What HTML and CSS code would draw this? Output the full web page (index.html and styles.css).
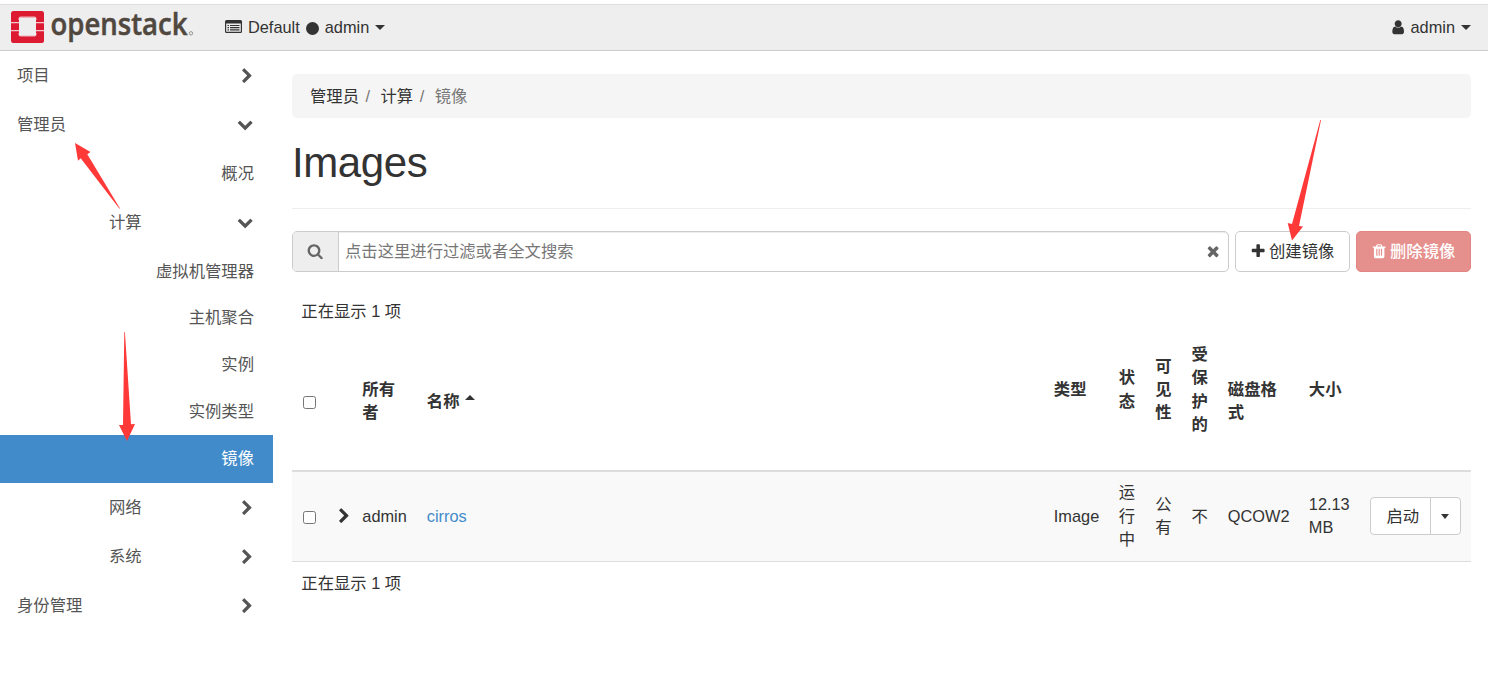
FILE: index.html
```html
<!DOCTYPE html>
<html lang="zh-CN">
<head>
	<meta charset="UTF-8">
	<meta name="viewport" content="width=device-width, initial-scale=1.0">
	<title>Images - OpenStack Dashboard</title>
	<link rel="stylesheet" href="styles.css">
</head>
<body>

<!-- shared icons -->
<svg class="sprite" width="0" height="0">
	<symbol id="chevron-right" viewBox="0 0 1792 1792"><path d="M1363 877l-742 742q-19 19-45 19t-45-19l-166-166q-19-19-19-45t19-45l531-531-531-531q-19-19-19-45t19-45l166-166q19-19 45-19t45 19l742 742q19 19 19 45t-19 45z"/></symbol>
	<symbol id="chevron-down" viewBox="0 0 1792 1792"><path d="M1683 808l-742 741q-19 19-45 19t-45-19l-742-741q-19-19-19-45.500t19-45.500l166-165q19-19 45-19t45 19l531 531 531-531q19-19 45-19t45 19l166 165q19 19 19 45.500t-19 45.500z"/></symbol>
	<symbol id="user" viewBox="0 0 1792 1792"><path d="M1536 1399q0 109-62.500 187t-150.500 78h-854q-88 0-150.500-78t-62.500-187q0-85 8.500-160.500t31.500-152 58.500-131 94-89 134.500-34.500q131 128 313 128t313-128q76 0 134.500 34.500t94 89 58.500 131 31.500 152 8.500 160.500zm-256-887q0 159-112.500 271.500t-271.500 112.500-271.500-112.500-112.500-271.500 112.500-271.500 271.500-112.500 271.500 112.500 112.500 271.500z"/></symbol>
	<symbol id="search" viewBox="0 0 1792 1792"><path d="M1216 832q0-185-131.500-316.500t-316.500-131.500-316.500 131.500-131.500 316.500 131.500 316.500 316.500 131.500 316.500-131.500 131.500-316.500zm512 832q0 52-38 90t-90 38q-54 0-90-38l-343-342q-179 124-399 124-143 0-273.500-55.500t-225-150-150-225-55.500-273.500 55.500-273.500 150-225 225-150 273.500-55.500 273.500 55.500 225 150 150 225 55.500 273.500q0 220-124 399l343 343q37 37 37 90z"/></symbol>
	<symbol id="plus" viewBox="0 0 1792 1792"><path d="M1600 736v192q0 40-28 68t-68 28h-416v416q0 40-28 68t-68 28h-192q-40 0-68-28t-28-68v-416h-416q-40 0-68-28t-28-68v-192q0-40 28-68t68-28h416v-416q0-40 28-68t68-28h192q40 0 68 28t28 68v416h416q40 0 68 28t28 68z"/></symbol>
	<symbol id="times" viewBox="0 0 1792 1792"><path d="M1490 1322q0 40-28 68l-136 136q-28 28-68 28t-68-28l-294-294-294 294q-28 28-68 28t-68-28l-136-136q-28-28-28-68t28-68l294-294-294-294q-28-28-28-68t28-68l136-136q28-28 68-28t68 28l294 294 294-294q28-28 68-28t68 28l136 136q28 28 28 68t-28 68l-294 294 294 294q28 28 28 68z"/></symbol>
	<symbol id="trash" viewBox="0 0 1792 1792"><path d="M704 1376v-704q0-14-9-23t-23-9h-64q-14 0-23 9t-9 23v704q0 14 9 23t23 9h64q14 0 23-9t9-23zm256 0v-704q0-14-9-23t-23-9h-64q-14 0-23 9t-9 23v704q0 14 9 23t23 9h64q14 0 23-9t9-23zm256 0v-704q0-14-9-23t-23-9h-64q-14 0-23 9t-9 23v704q0 14 9 23t23 9h64q14 0 23-9t9-23zm-544-992h448l-48-117q-7-9-17-11h-317q-10 2-17 11zm928 32v64q0 14-9 23t-23 9h-96v948q0 83-47 143.500t-113 60.500h-832q-66 0-113-58.500t-47-141.500v-952h-96q-14 0-23-9t-9-23v-64q0-14 9-23t23-9h309l70-167q15-37 54-63t79-26h320q40 0 79 26t54 63l70 167h309q14 0 23 9t9 23z"/></symbol>
</svg>

<header class="navbar">
	<a class="brand" href="#">
		<svg width="184" height="44" viewBox="0 0 184 44">
			<rect x="0" y="5" width="33" height="32" rx="2.500" fill="#dc1a32"/>
			<path d="M7.500 14v-1.500a2 2 0 0 1 2-2h14a2 2 0 0 1 2 2V14zM7.500 27v1.500a2 2 0 0 0 2 2h14a2 2 0 0 0 2-2V27z" fill="#f0b3bb"/>
			<rect x="8" y="12" width="17" height="17.500" rx="1" fill="#eee"/>
			<path d="M0 16.700h8M25 16.700h8M0 24.700h8M25 24.700h8" stroke="#f3c9ce" stroke-width="1.200"/>
			<text class="brand-name" x="39.500" y="29" textLength="137" lengthAdjust="spacingAndGlyphs">openstack</text>
			<circle cx="180" cy="27.300" r="1.700" fill="none" stroke="#8f8a84" stroke-width=".9"/>
		</svg>
	</a>
	<a class="context" href="#">
		<svg class="list-icon" width="17" height="14" viewBox="0 0 17 14">
			<path fill-rule="evenodd" d="M1.500 0h14A1.500 1.500 0 0 1 17 1.500v10a1.500 1.500 0 0 1-1.500 1.500h-14A1.500 1.500 0 0 1 0 11.500v-10A1.500 1.500 0 0 1 1.500 0zM1.200 3.500v8.300h14.600V3.500z"/>
			<path d="M2.500 5.500H4M5 5.500h9.500M2.500 7.700H4M5 7.700h9.500M2.500 9.900H4M5 9.900h9.500" stroke="#333" stroke-width="1.200"/>
		</svg>
		<span>Default</span>
		<i class="dot"></i>
		<span>admin</span>
		<b class="caret"></b>
	</a>
	<a class="user-menu" href="#">
		<svg class="icon"><use href="#user"/></svg>
		<span>admin</span>
		<b class="caret"></b>
	</a>
</header>

<div class="page">
	<nav class="sidebar">
		<a class="item">项目<svg class="icon right"><use href="#chevron-right"/></svg></a>
		<a class="item">管理员<svg class="icon"><use href="#chevron-down"/></svg></a>
		<a class="item leaf">概况</a>
		<a class="item group">计算<svg class="icon"><use href="#chevron-down"/></svg></a>
		<div class="panels">
			<a class="item leaf">虚拟机管理器</a>
			<a class="item leaf">主机聚合</a>
			<a class="item leaf">实例</a>
			<a class="item leaf">实例类型</a>
			<a class="item leaf active">镜像</a>
		</div>
		<a class="item group">网络<svg class="icon right"><use href="#chevron-right"/></svg></a>
		<a class="item group">系统<svg class="icon right"><use href="#chevron-right"/></svg></a>
		<a class="item">身份管理<svg class="icon right"><use href="#chevron-right"/></svg></a>
	</nav>

	<main class="content">
		<ol class="breadcrumb">
			<li>管理员</li>
			<li>计算</li>
			<li class="current">镜像</li>
		</ol>

		<h1>Images</h1>

		<div class="toolbar">
			<div class="search">
				<span class="addon"><svg class="icon"><use href="#search"/></svg></span>
				<input class="search-input" type="text" placeholder="点击这里进行过滤或者全文搜索">
				<svg class="icon clear"><use href="#times"/></svg>
			</div>
			<button class="btn"><svg class="icon"><use href="#plus"/></svg>创建镜像</button>
			<button class="btn danger"><svg class="icon"><use href="#trash"/></svg>删除镜像</button>
		</div>

		<table class="images">
			<colgroup>
				<col class="c-check"><col class="c-expand"><col class="c-owner"><col class="c-name">
				<col class="c-type"><col class="c-narrow"><col class="c-narrow"><col class="c-narrow">
				<col class="c-format"><col class="c-size"><col class="c-actions">
			</colgroup>
			<thead>
				<tr><td class="count" colspan="11">正在显示 1 项</td></tr>
				<tr class="heads">
					<th><input type="checkbox"></th>
					<th></th>
					<th>所有者</th>
					<th>名称 <b class="caret up"></b></th>
					<!-- the hidden sort caret wraps to a line of its own -->
					<th class="sortable">类型</th>
					<th class="sortable">状态</th>
					<th class="sortable">可见性</th>
					<th class="sortable">受保护的</th>
					<th>磁盘格式</th>
					<th class="sortable">大小</th>
					<th></th>
				</tr>
			</thead>
			<tbody>
				<tr>
					<td><input type="checkbox"></td>
					<td class="expand"><svg class="icon"><use href="#chevron-right"/></svg></td>
					<td>admin</td>
					<td><a href="#">cirros</a></td>
					<td>Image</td>
					<td>运行中</td>
					<td>公有</td>
					<td>不</td>
					<td>QCOW2</td>
					<td>12.13 MB</td>
					<td>
						<div class="btn-group">
							<button class="btn launch">启动</button>
							<button class="btn toggle"><b class="caret"></b></button>
						</div>
					</td>
				</tr>
			</tbody>
			<tfoot>
				<tr><td class="count" colspan="11">正在显示 1 项</td></tr>
			</tfoot>
		</table>
	</main>
</div>

<!-- pointers drawn over the page -->
<svg class="arrows" width="1488" height="689" viewBox="0 0 1488 689">
	<path d="M75 143L90.500 152L87.300 154.300L120 208.500L119.300 208.500L80.700 158.300L78 160.700z"/>
	<path d="M124.300 332H124.900L131 424.300L135 424L127 441L119 425L123 425z"/>
	<path d="M1320.300 120H1321L1299 226L1303 226.500L1292 240.500L1287.700 223L1292 224z"/>
</svg>

</body>
</html>
```
FILE: styles.css
```css
* {
	box-sizing: border-box;
}

body {
	margin: 0;
	padding-top: 4px;
	font-family: "Liberation Sans", "Noto Sans CJK SC", sans-serif;
	font-size: 16.33px;
	line-height: 23.33px;
	color: #333;
	background: white;
	overflow: hidden;
}

a {
	color: #428bca;
	text-decoration: none;
}

button, input {
	font: inherit;
	color: inherit;
}

.sprite {
	display: block;
}

.icon {
	width: 16.33px;
	height: 16.33px;
	fill: currentColor;
	flex: none;
}

.caret {
	display: inline-block;
	border-top: 5px solid;
	border-left: 5px solid transparent;
	border-right: 5px solid transparent;
}
.caret.up {
	margin-left: 1px;
	border-top: none;
	border-bottom: 5px solid;
	vertical-align: 7px;
}

/* top bar */
.navbar {
	display: flex;
	align-items: center;
	height: 47px;
	padding: 0 17px 0 11px;
	background: #eee;
	border-top: 1px solid #ddd;
	border-bottom: 1px solid #ccc;
}
.navbar a {
	display: flex;
	align-items: center;
	color: #333;
}
.brand svg {
	overflow: visible;
}
.brand-name {
	font-family: "Open Sans", sans-serif;
	font-size: 30px;
	font-weight: 600;
	line-height: 30px;
	fill: #50483f;
	stroke: #50483f;
	stroke-width: .5;
}
.context {
	margin-left: 30px;
}
.list-icon {
	fill: #333;
	margin-right: 6px;
}
.dot {
	width: 13px;
	height: 13px;
	margin: 3px 6px 0;
	border-radius: 50%;
	background: #333;
}
.navbar .caret {
	margin-left: 6px;
}
.user-menu {
	margin-left: auto;
}
.user-menu .icon {
	margin-right: 4px;
}

.page {
	display: flex;
}

/* left navigation */
.sidebar {
	width: 273px;
}
.item {
	display: flex;
	align-items: center;
	justify-content: space-between;
	height: 49px;
	padding: 0 19px 0 17px;
	color: #555;
}
.item .icon {
	margin-right: 1px;
}
.item .icon.right {
	margin: 2px -1px 0 0;
}
.item.group {
	padding-left: 109px;
}
.item.leaf {
	justify-content: flex-end;
}
.panels {
	padding-top: 1px;
}
.panels .item {
	height: 46.75px;
}
.panels .item.active {
	height: 48px;
	background: #428bca;
	color: white;
}

/* main column */
.content {
	width: 1179px;
	margin: 23px 0 0 19px;
}
.breadcrumb {
	display: flex;
	align-items: center;
	height: 44px;
	margin: 0;
	padding: 1px 18px 0;
	list-style: none;
	background: #f5f5f5;
	border-radius: 5px;
}
.breadcrumb li + li::before {
	content: "/";
	padding: 0 10.5px 0 6.5px;
	color: #777;
}
.breadcrumb .current {
	color: #777;
}
h1 {
	height: 91px;
	margin: 0 0 22px;
	padding-top: 22px;
	border-bottom: 1px solid #eee;
	font-size: 42px;
	font-weight: 500;
	line-height: 46px;
	letter-spacing: -.4px;
}

.toolbar {
	display: flex;
	gap: 6px;
	height: 41px;
}
.search {
	display: flex;
	align-items: center;
	width: 937px;
	border: 1px solid #ccc;
	border-radius: 5px;
	box-shadow: inset 0 1px 1px rgba(0, 0, 0, .075);
	color: #666;
}
.addon {
	display: flex;
	align-items: center;
	justify-content: center;
	width: 46px;
	height: 100%;
	background: #eee;
	border-right: 1px solid #ccc;
	border-radius: 4px 0 0 4px;
}
.search-input {
	flex: 1;
	padding: 0 6px;
	border: none;
	background: transparent;
}
.search-input::placeholder {
	color: #777;
}
.clear {
	margin-right: 7px;
}
.btn {
	display: flex;
	align-items: center;
	justify-content: center;
	width: 115px;
	padding: 0;
	border: 1px solid #ccc;
	border-radius: 5px;
	background: white;
	line-height: 23px;
}
.btn .icon {
	margin: 0 3px 0 -1px;
}
.btn.danger {
	background: #e6908e;
	border-color: #e48583;
	color: white;
	font-weight: 500;
}

/* image table */
.images {
	width: 1179px;
	margin-top: 19px;
	table-layout: fixed;
	border-collapse: collapse;
}
.images th, .images td {
	padding: 9.33px;
	text-align: left;
	vertical-align: middle;
}
.c-check { width: 36px; }
.c-expand { width: 25px; }
.c-owner { width: 64.5px; }
.c-name { width: 627px; }
.c-type { width: 65px; }
.c-narrow { width: 36.33px; }
.c-format { width: 81px; }
.c-size { width: 61px; }
.c-actions { width: 110.5px; }

.images .sortable::after {
	content: "";
	display: block;
	height: 23.33px;
}
.images .heads th {
	height: 138px;
	border-bottom: 2px solid #ddd;
}
.images tbody td {
	background: #f9f9f9;
	border-bottom: 1px solid #ddd;
}
.images input {
	display: block;
	width: 13px;
	height: 13px;
	margin: 2px 0 0 2px;
}
.images .expand {
	padding: 0 0 0 8px;
}
.expand .icon {
	display: block;
}
.btn-group {
	display: flex;
}
.btn-group .btn {
	height: 38px;
}
.btn-group .launch {
	width: 61px;
	padding-left: 5px;
	border-radius: 4px 0 0 4px;
}
.btn-group .toggle {
	width: 31px;
	margin-left: -1px;
	border-radius: 0 4px 4px 0;
}
.toggle .caret {
	border-width: 5px 4.5px 0;
}
.images tfoot td {
	padding-top: 10px;
}

.arrows {
	position: absolute;
	top: 0;
	left: 0;
	fill: #ff3838;
	pointer-events: none;
}
```
